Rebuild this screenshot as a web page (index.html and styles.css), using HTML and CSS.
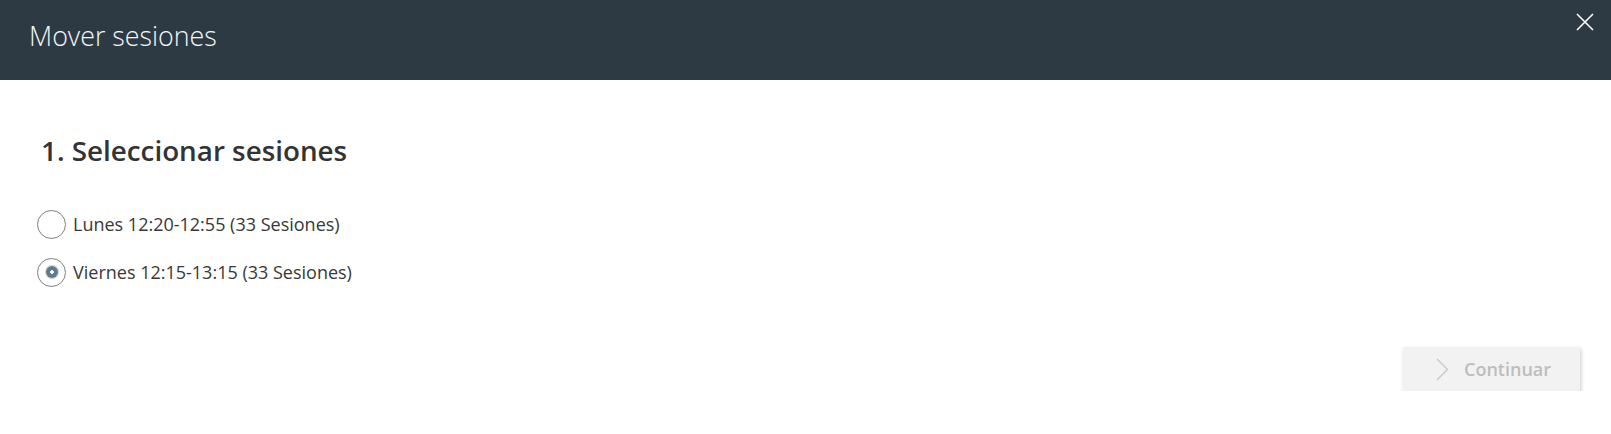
FILE: index.html
```html
<!DOCTYPE html>
<html lang="es">
<head>
    <meta charset="UTF-8">
    <meta name="viewport" content="width=device-width, initial-scale=1.0">
    <title>Mover sesiones</title>
    <link rel="stylesheet" href="styles.css">
</head>
<body>
    <header class="dialog-header">
        <h1>Mover sesiones</h1>
        <button class="close-btn" aria-label="Cerrar">
            <svg width="18" height="18" viewBox="0 0 18 18">
                <path d="M1 1 L17 17 M17 1 L1 17" stroke="#fff" stroke-width="1.6" fill="none"/>
            </svg>
        </button>
    </header>
    <main class="dialog-body">
        <h2>1. Seleccionar sesiones</h2>
        <div class="options">
            <label class="option">
                <span class="radio"></span>
                <span>Lunes 12:20-12:55 (33 Sesiones)</span>
            </label>
            <label class="option">
                <span class="radio checked"></span>
                <span>Viernes 12:15-13:15 (33 Sesiones)</span>
            </label>
        </div>
        <div class="actions">
            <button class="continue-btn" disabled>
                <svg width="13" height="23" viewBox="0 0 13 23">
                    <path d="M1 1 L11.5 11.5 L1 22" stroke="#c8c8c8" stroke-width="1.4" fill="none"/>
                </svg>
                <span>Continuar</span>
            </button>
        </div>
    </main>
</body>
</html>
```

FILE: styles.css
```css
body {
    margin: 0;
    font-family: "Open Sans", "Noto Sans", sans-serif;
    background: #fff;
    color: #333;
}

.dialog-header {
    background-color: #2d3a43;
    height: 80px;
    display: flex;
    align-items: center;
    justify-content: space-between;
    padding: 0 17px 0 29px;
}

    .dialog-header h1 {
        margin: 0 0 10px 0;
        font-weight: 300;
        font-size: 26.8px;
        color: #f4f6f7;
    }

.close-btn {
    background: none;
    border: none;
    padding: 0;
    margin-bottom: 36px;
    width: 18px;
    height: 18px;
}

.dialog-body {
    padding: 52px 31px 0 37px;
}

    .dialog-body h2 {
        margin: 0 0 42px 4px;
        font-size: 27.8px;
        line-height: 36px;
        font-weight: 600;
        color: #333;
    }

.options {
    display: flex;
    flex-direction: column;
    gap: 20px;
}

.option {
    display: flex;
    align-items: center;
    gap: 7px;
    font-size: 18px;
    color: #383838;
    height: 28px;
}

.radio {
    width: 27px;
    height: 27px;
    border: 1px solid #808080;
    border-radius: 50%;
    display: flex;
    align-items: center;
    justify-content: center;
}

    .radio.checked::after {
        content: "";
        width: 12px;
        height: 12px;
        border-radius: 50%;
        background: radial-gradient(circle, #fff 0 1.5px, #5f7b8b 2px);
        box-shadow: 0 0 0 1px #c9d2d8;
    }

.actions {
    display: flex;
    justify-content: flex-end;
    margin-top: 61px;
}

.continue-btn {
    width: 177px;
    height: 44px;
    background: #f2f2f2;
    border: none;
    box-shadow: 1px 2px 4px rgba(0, 0, 0, 0.2);
    display: flex;
    align-items: center;
    gap: 15px;
    padding: 0 0 0 33px;
    font-family: "Open Sans", "Noto Sans", sans-serif;
    font-size: 18px;
    font-weight: 600;
    color: #bdbdbd;
}
```
